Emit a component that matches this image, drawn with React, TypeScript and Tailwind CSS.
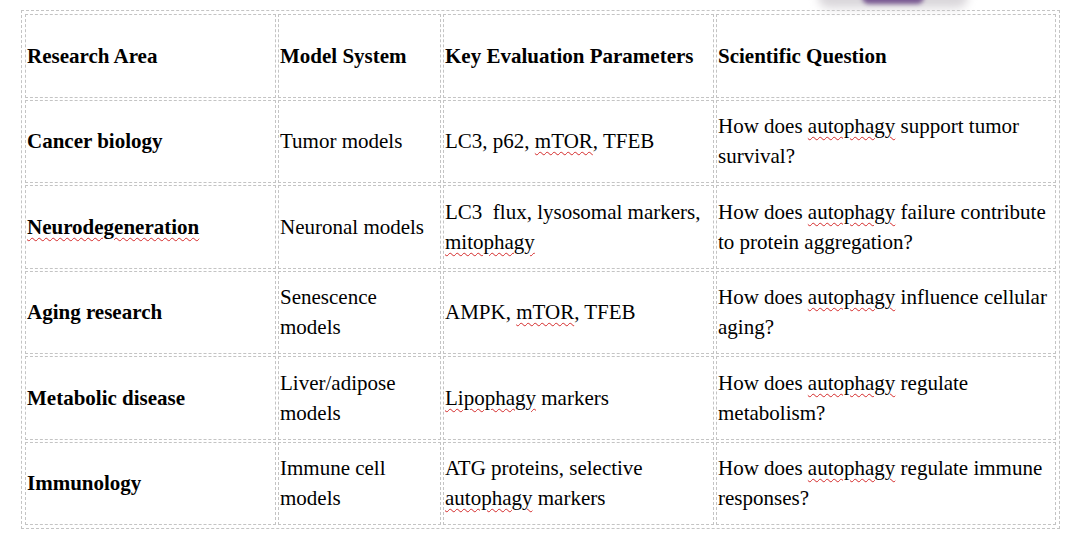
const rows = [
    {
        area: [{ t: "Cancer biology" }],
        model: "Tumor models",
        params: [{ t: "LC3, p62, " }, { t: "mTOR", w: true }, { t: ", TFEB" }],
        question: [{ t: "How does " }, { t: "autophagy", w: true }, { t: " support tumor survival?" }],
    },
    {
        area: [{ t: "Neurodegeneration", w: true }],
        model: "Neuronal models",
        params: [{ t: "LC3\u00a0 flux, lysosomal markers, " }, { t: "mitophagy", w: true }],
        question: [{ t: "How does " }, { t: "autophagy", w: true }, { t: " failure contribute to protein aggregation?" }],
    },
    {
        area: [{ t: "Aging research" }],
        model: "Senescence models",
        params: [{ t: "AMPK, " }, { t: "mTOR", w: true }, { t: ", TFEB" }],
        question: [{ t: "How does " }, { t: "autophagy", w: true }, { t: " influence cellular aging?" }],
    },
    {
        area: [{ t: "Metabolic disease" }],
        model: "Liver/adipose models",
        params: [{ t: "Lipophagy", w: true }, { t: " markers" }],
        question: [{ t: "How does " }, { t: "autophagy", w: true }, { t: " regulate metabolism?" }],
    },
    {
        area: [{ t: "Immunology" }],
        model: "Immune cell models",
        params: [{ t: "ATG proteins, selective " }, { t: "autophagy", w: true }, { t: " markers" }],
        question: [{ t: "How does " }, { t: "autophagy", w: true }, { t: " regulate immune responses?" }],
    },
];

type Part = { t: string; w?: boolean };

const Text = ({ parts }: { parts: Part[] }) => (
    <>
        {parts.map((p, i) =>
            p.w ? (
                <span key={i} className="underline decoration-wavy decoration-[#d42a2a] decoration-1 underline-offset-[3px]">
                    {p.t}
                </span>
            ) : (
                <span key={i}>{p.t}</span>
            )
        )}
    </>
);

const cell = "h-[83.5px] p-px align-middle text-left border border-dashed border-[#c4c4c4]";

const App = () => {
    return (
        <div
            className="relative w-[1079px] h-[540px] bg-white overflow-hidden pt-[10px] pl-[21px] text-black"
            style={{ fontFamily: '"Liberation Serif", "Times New Roman", serif' }}
        >
            {/* blurred purple shape peeking at the top edge */}
            <div className="absolute top-[-14px] left-[818px] w-[150px] h-[22px] rounded-full bg-[#d9d6da] blur-[5px]" />
            <div className="absolute top-[-10px] left-[862px] w-[62px] h-[14px] rounded-full bg-[#7a5a92] blur-[2px]" />

            <table className="relative table-fixed w-[1039px] p-px border-separate border-spacing-[2px] border border-dashed border-[#c4c4c4] text-[21px] leading-[30px]">
                <colgroup>
                    <col className="w-[251px]" />
                    <col className="w-[163px]" />
                    <col className="w-[271px]" />
                    <col />
                </colgroup>
                <tbody>
                    <tr className="font-bold">
                        <td className={cell}>Research Area</td>
                        <td className={cell}>Model System</td>
                        <td className={cell}>Key Evaluation Parameters</td>
                        <td className={cell}>Scientific Question</td>
                    </tr>
                    {rows.map((r, i) => (
                        <tr key={i}>
                            <td className={`${cell} font-bold`}>
                                <Text parts={r.area} />
                            </td>
                            <td className={cell}>{r.model}</td>
                            <td className={cell}>
                                <Text parts={r.params} />
                            </td>
                            <td className={cell}>
                                <Text parts={r.question} />
                            </td>
                        </tr>
                    ))}
                </tbody>
            </table>
        </div>
    );
};

export default App;
